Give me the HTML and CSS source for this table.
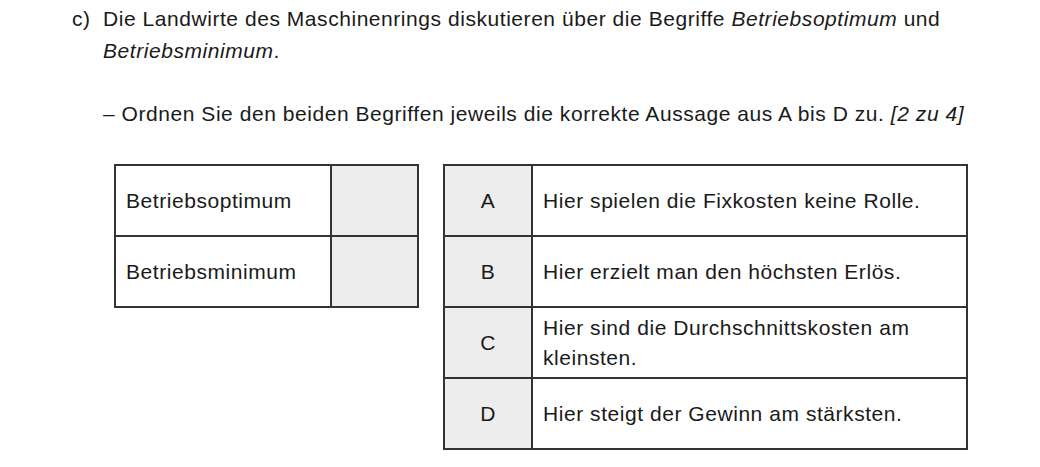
FILE: index.html
```html
<!DOCTYPE html>
<html lang="de">
<head>
<meta charset="utf-8">
<link rel="stylesheet" href="styles.css">
</head>
<body>
<div class="task">
  <div class="label">c)</div>
  <div class="content">
    <p class="intro">Die Landwirte des Maschinenrings diskutieren über die Begriffe <em>Betriebsoptimum</em> und <em>Betriebsminimum</em>.</p>
    <p class="instruction">– Ordnen Sie den beiden Begriffen jeweils die korrekte Aussage aus A bis D zu. <em>[2 zu 4]</em></p>
    <div class="tables">
      <table class="terms">
        <tr><td class="term">Betriebsoptimum</td><td class="answer"></td></tr>
        <tr><td class="term">Betriebsminimum</td><td class="answer"></td></tr>
      </table>
      <table class="options">
        <tr><td class="key">A</td><td class="text">Hier spielen die Fixkosten keine Rolle.</td></tr>
        <tr><td class="key">B</td><td class="text">Hier erzielt man den höchsten Erlös.</td></tr>
        <tr><td class="key">C</td><td class="text">Hier sind die Durchschnittskosten am kleinsten.</td></tr>
        <tr><td class="key">D</td><td class="text">Hier steigt der Gewinn am stärksten.</td></tr>
      </table>
    </div>
  </div>
</div>
</body>
</html>
```
FILE: styles.css
```css
html, body {
  margin: 0;
  padding: 0;
  background: #fff;
}
body {
  font-family: "Liberation Sans", Arial, sans-serif;
  font-size: 21px;
  letter-spacing: 0.55px;
  color: #1a1a1a;
}
.task {
  display: flex;
  padding: 3px 0 0 72px;
}
.label {
  width: 31px;
  line-height: 32px;
}
.content {
  flex: 1;
}
p {
  margin: 0;
  line-height: 32px;
}
.intro {
  width: 880px;
}
.instruction {
  margin-top: 31px;
}
.tables {
  display: flex;
  align-items: flex-start;
  gap: 24px;
  margin: 34px 0 0 11px;
}
table {
  border-collapse: collapse;
}
td {
  border: 2px solid #333;
  padding: 0 10px;
  line-height: 30px;
  height: 69px;
}
.terms {
  width: 305px;
}
.term {
  width: 194px;
}
.answer {
  background: #ededed;
}
.options {
  width: 525px;
}
.key {
  width: 66px;
  text-align: center;
  background: #ededed;
}
```
